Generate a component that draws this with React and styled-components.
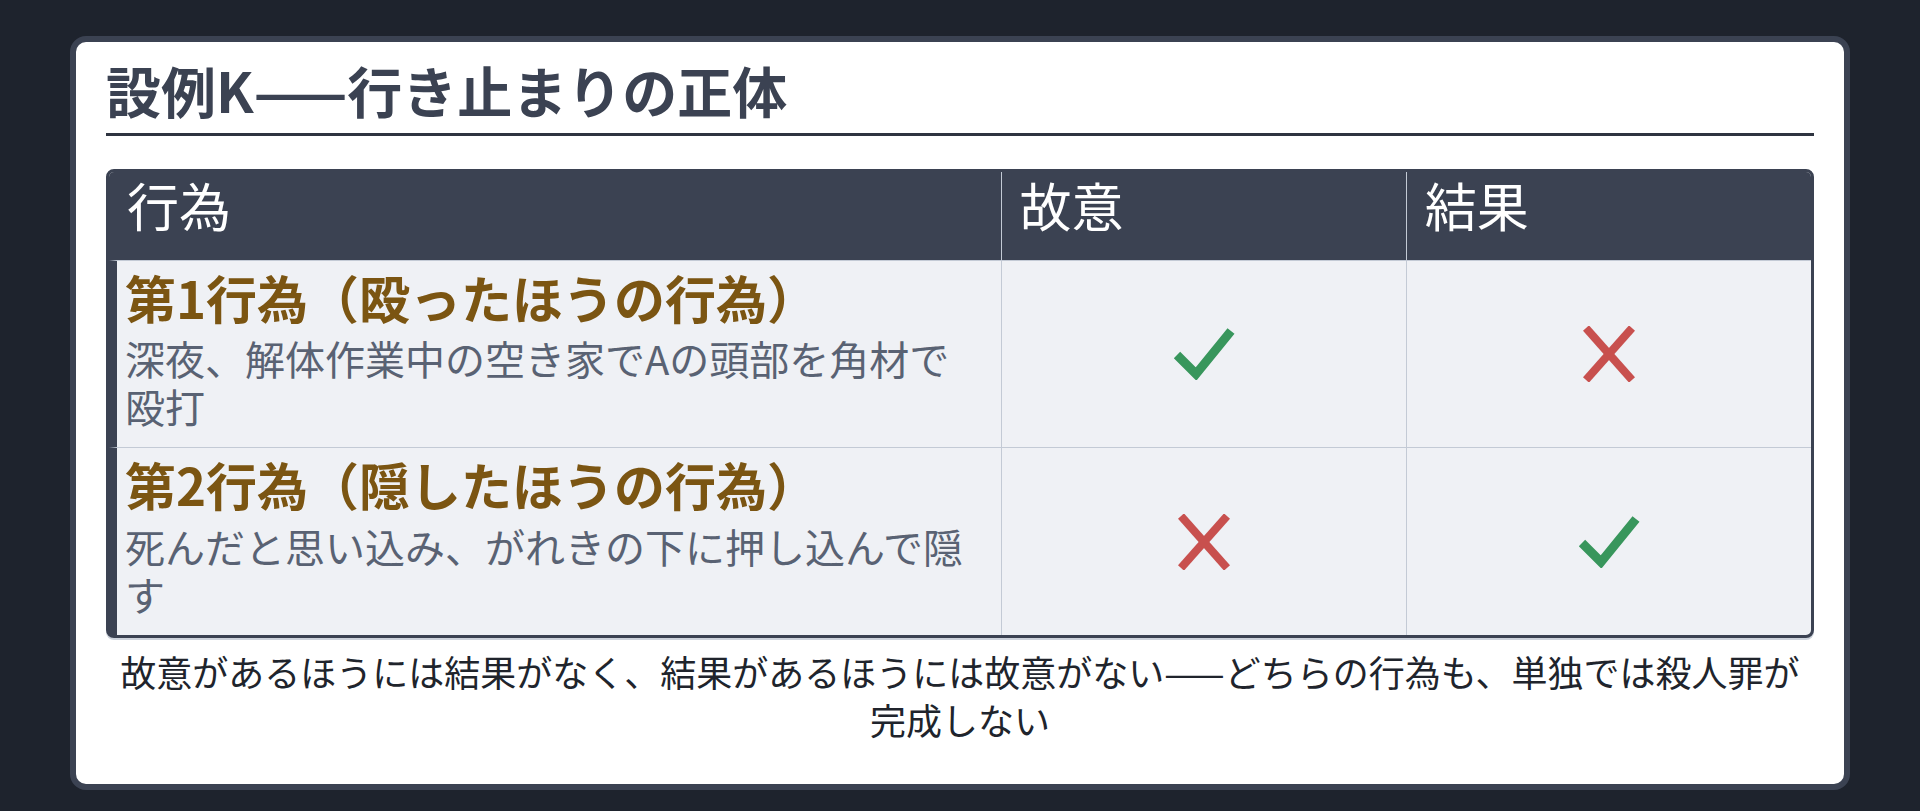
import React from "react";
import styled, { createGlobalStyle } from "styled-components";

const GlobalStyle = createGlobalStyle`
  html, body {
    margin: 0;
    padding: 0;
    background: #1e232d;
  }
  body {
    font-family: "Noto Sans CJK JP", "Noto Sans", sans-serif;
  }
`;

const Page = styled.div`
  padding: 36px 70px 25px;
  box-sizing: border-box;
  min-height: 811px;
`;

const Card = styled.section`
  background: #fff;
  border: 6px solid #3b4252;
  border-radius: 16px;
  padding: 15px 30px 40px;
`;

const Title = styled.h1`
  margin: 0;
  font-size: 55px;
  font-weight: 700;
  line-height: 1.18;
  color: #3b4252;
  padding-bottom: 11px;
  border-bottom: 3px solid #2e3440;
`;

const Table = styled.div`
  margin-top: 33px;
  display: grid;
  grid-template-columns: 2.2fr 1fr 1fr;
  border: 3px solid #3b4252;
  border-radius: 8px;
  background: #eff1f5;
  box-shadow: 0 2px 0 #cdd3dc;
`;

const HeadCell = styled.div`
  background: #3b4252;
  color: #fff;
  font-size: 52px;
  font-weight: 400;
  line-height: 1.2;
  padding: 2px 18px 24px;
  border-left: ${(p) => (p.$first ? "none" : "1px solid #c3cad5")};
  border-radius: ${(p) => (p.$first ? "5px 0 0 0" : p.$last ? "0 5px 0 0" : "0")};
`;

const Cell = styled.div`
  border-top: 1px solid #c3cad5;
  border-left: ${(p) => (p.$first ? "8px solid #3b4252" : "1px solid #c3cad5")};
  padding: ${(p) => (p.$first ? "6px 24px 17px 8px" : "0")};
  display: ${(p) => (p.$first ? "block" : "flex")};
  align-items: center;
  justify-content: center;
`;

const ActName = styled.div`
  font-size: 51px;
  font-weight: 700;
  line-height: 1.2;
  color: #7b5512;
  margin-bottom: 6px;
`;

const ActDesc = styled.div`
  font-size: 40px;
  line-height: 1.2;
  color: #596273;
`;

const Caption = styled.p`
  margin: 9px 0 0;
  font-size: 36px;
  line-height: 1.35;
  text-align: center;
  color: #20242c;
`;

const Check = () => (
  <svg width="62" height="52" viewBox="0 0 62 52">
    <polyline
      points="4,27 23,46 58,3"
      fill="none"
      stroke="#38965c"
      strokeWidth="9"
      strokeLinejoin="miter"
    />
  </svg>
);

const Cross = () => (
  <svg width="56" height="56" viewBox="0 0 56 56">
    <g stroke="#c8504e" strokeWidth="8">
      <line x1="5" y1="2" x2="51" y2="54" />
      <line x1="51" y1="2" x2="5" y2="54" />
    </g>
  </svg>
);

const rows = [
  {
    name: "第1行為（殴ったほうの行為）",
    desc: "深夜、解体作業中の空き家でAの頭部を角材で殴打",
    intent: true,
    result: false,
  },
  {
    name: "第2行為（隠したほうの行為）",
    desc: "死んだと思い込み、がれきの下に押し込んで隠す",
    intent: false,
    result: true,
  },
];

export default function App() {
  return (
    <>
      <GlobalStyle />
      <Page>
        <Card>
          <Title>設例K——行き止まりの正体</Title>
          <Table>
            <HeadCell $first>行為</HeadCell>
            <HeadCell>故意</HeadCell>
            <HeadCell $last>結果</HeadCell>
            {rows.map((r) => (
              <React.Fragment key={r.name}>
                <Cell $first>
                  <ActName>{r.name}</ActName>
                  <ActDesc>{r.desc}</ActDesc>
                </Cell>
                <Cell>{r.intent ? <Check /> : <Cross />}</Cell>
                <Cell>{r.result ? <Check /> : <Cross />}</Cell>
              </React.Fragment>
            ))}
          </Table>
          <Caption>
            故意があるほうには結果がなく、結果があるほうには故意がない——どちらの行為も、単独では殺人罪が完成しない
          </Caption>
        </Card>
      </Page>
    </>
  );
}
